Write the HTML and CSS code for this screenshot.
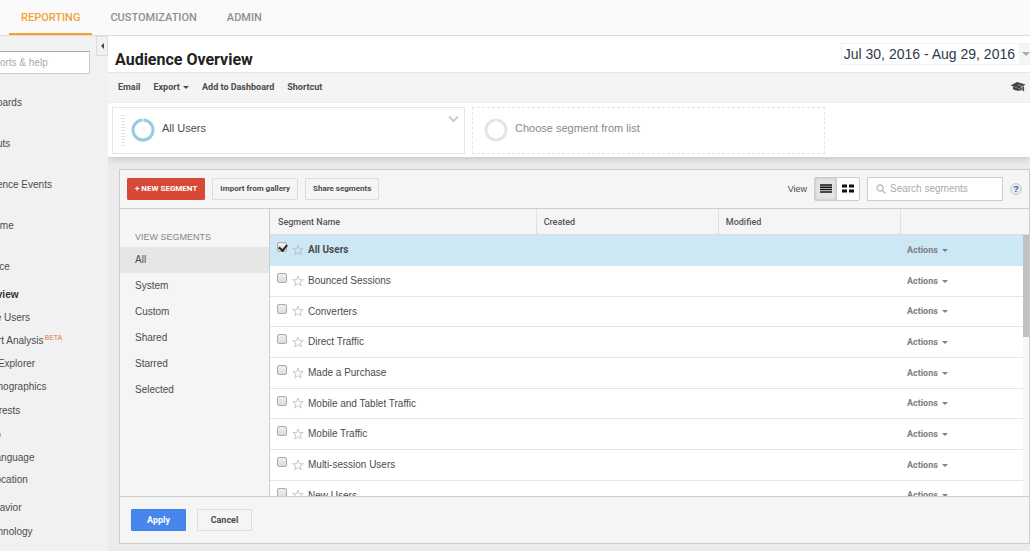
FILE: index.html
```html
<!DOCTYPE html>
<html lang="en">

<head>
    <meta charset="UTF-8">
    <meta name="viewport" content="width=device-width, initial-scale=1.0">
    <title>Audience Overview</title>
    <link rel="stylesheet" href="styles.css">
</head>

<body>
    <nav class="topnav">
        <a href="#" class="active">REPORTING</a>
        <a href="#">CUSTOMIZATION</a>
        <a href="#">ADMIN</a>
    </nav>
    <div class="page">
        <aside class="sidebar">
            <button class="collapse" aria-label="Collapse menu"><span class="arrow_left"></span></button>
            <input type="text" class="report_search" placeholder="Search reports &amp; help" aria-label="Search reports &amp; help">
            <ul class="menu">
                <li class="section"><a href="#">Dashboards</a></li>
                <li class="section"><a href="#">Shortcuts</a></li>
                <li class="section"><a href="#">Intelligence Events</a></li>
                <li class="section"><a href="#">Real-Time</a></li>
                <li class="section open"><a href="#">Audience</a></li>
                <li class="item current"><a href="#">Overview</a></li>
                <li class="item"><a href="#">Active Users</a></li>
                <li class="item"><a href="#">Cohort Analysis</a><sup>BETA</sup></li>
                <li class="item"><a href="#">User Explorer</a></li>
                <li class="group"><a href="#">Demographics</a></li>
                <li class="group"><a href="#">Interests</a></li>
                <li class="group"><a href="#">Geo</a></li>
                <li class="sub"><a href="#">Language</a></li>
                <li class="sub"><a href="#">Location</a></li>
                <li class="group after_sub"><a href="#">Behavior</a></li>
                <li class="group"><a href="#">Technology</a></li>
            </ul>
        </aside>
        <main class="main">
            <header class="title_bar">
                <h1>Audience Overview</h1>
                <button class="date_range">Jul 30, 2016 - Aug 29, 2016<span class="date_arrow"><span class="caret"></span></span></button>
            </header>
            <div class="toolbar">
                <button>Email</button>
                <button>Export <span class="caret"></span></button>
                <button>Add to Dashboard</button>
                <button>Shortcut</button>
                <button class="education" aria-label="Education">
                    <svg width="16" height="12" viewBox="0 0 16 12">
                        <path d="M0.5 4.5 L7 1 L15.5 3.6 L9.5 7.6 Z" fill="#444" />
                        <path d="M3 5.4 L9.5 7.8 L12 6.4 V8.6 C10 10.6 5.5 9.8 3 8 Z" fill="#444" />
                        <path d="M8 4 L12.8 5.4 V7" fill="none" stroke="#aaa" stroke-width="0.8" />
                        <path d="M12.5 6 L14 5.4 L14.2 10.6 L12.4 9.4 Z" fill="#444" />
                    </svg>
                </button>
            </div>
            <section class="segments">
                <div class="card">
                    <span class="grip"></span>
                    <svg class="ring" width="24" height="24" viewBox="0 0 24 24">
                        <circle cx="12" cy="12" r="10" fill="none" stroke="#94cce3" stroke-width="3" />
                        <path d="M12 0 V4" stroke="#fff" stroke-width="1" />
                    </svg>
                    <span class="card_name">All Users</span>
                    <button class="card_menu" aria-label="Segment options">
                        <svg width="11" height="8" viewBox="0 0 11 8">
                            <path d="M1 1.5 L5.5 6 L10 1.5" fill="none" stroke="#ccc" stroke-width="2" />
                        </svg>
                    </button>
                </div>
                <div class="card empty">
                    <svg class="ring" width="24" height="24" viewBox="0 0 24 24">
                        <circle cx="12" cy="12" r="10" fill="none" stroke="#e4e4e4" stroke-width="3" />
                        <path d="M12 0 V4" stroke="#fff" stroke-width="1" />
                    </svg>
                    <span class="card_name">Choose segment from list</span>
                </div>
            </section>
            <section class="panel">
                <div class="panel_top">
                    <button class="btn red">+ NEW SEGMENT</button>
                    <button class="btn">Import from gallery</button>
                    <button class="btn">Share segments</button>
                    <span class="view_label">View</span>
                    <div class="view_toggle">
                        <button class="on" aria-label="List view">
                            <svg width="12" height="9" viewBox="0 0 12 9">
                                <path d="M0 1 H12 M0 3.3 H12 M0 5.6 H12 M0 8 H12" stroke="#111" stroke-width="1.5" />
                            </svg>
                        </button>
                        <button aria-label="Grid view">
                            <svg width="12" height="9" viewBox="0 0 12 9">
                                <path d="M0 2 H5 M7 2 H12 M0 7 H5 M7 7 H12" stroke="#111" stroke-width="3" />
                            </svg>
                        </button>
                    </div>
                    <label class="search">
                        <svg width="10" height="10" viewBox="0 0 10 10">
                            <circle cx="4" cy="4" r="3" fill="none" stroke="#bbb" stroke-width="1.3" />
                            <path d="M6.2 6.2 L9.3 9.3" stroke="#bbb" stroke-width="1.6" />
                        </svg>
                        <input type="text" placeholder="Search segments" aria-label="Search segments">
                    </label>
                    <button class="help" aria-label="Help">?</button>
                </div>
                <div class="panel_body">
                    <div class="filters">
                        <h2>VIEW SEGMENTS</h2>
                        <a href="#" class="active">All</a>
                        <a href="#">System</a>
                        <a href="#">Custom</a>
                        <a href="#">Shared</a>
                        <a href="#">Starred</a>
                        <a href="#">Selected</a>
                    </div>
                    <div class="list">
                        <table>
                            <thead>
                                <tr>
                                    <th class="col_name">Segment Name</th>
                                    <th class="col_date">Created</th>
                                    <th class="col_date">Modified</th>
                                    <th class="col_actions"></th>
                                </tr>
                            </thead>
                            <tbody id="rows"></tbody>
                        </table>
                        <div class="scroll"><div class="thumb"></div></div>
                    </div>
                </div>
                <div class="panel_bottom">
                    <button class="btn blue">Apply</button>
                    <button class="btn cancel">Cancel</button>
                </div>
            </section>
        </main>
    </div>
    <script src="script.js"></script>
</body>

</html>
```
FILE: styles.css
```css
* {
    margin: 0;
    padding: 0;
    box-sizing: border-box;
}

body {
    min-height: 100vh;
    display: flex;
    flex-direction: column;
    font-family: "Liberation Sans", Arial, sans-serif;
    font-size: 10px;
    color: #4c4c4c;
    background-color: #ebebeb;
    overflow-x: hidden;
}

button {
    font-family: inherit;
    color: inherit;
    border: none;
    background: none;
}

a {
    color: inherit;
    text-decoration: none;
}

svg {
    display: block;
}

.caret {
    display: inline-block;
    border: 3px solid transparent;
    border-top-color: currentColor;
    border-bottom: none;
    vertical-align: middle;
}

/* top navigation */
.topnav {
    display: flex;
    gap: 6px;
    height: 36px;
    padding-left: 9px;
    background-color: #fafafa;
    border-bottom: 1px solid #ddd;
}

.topnav a {
    padding: 0 12px;
    font: 500 11px/36px Roboto, sans-serif;
    color: #8f8f8f;
}

.topnav .active {
    height: 35px;
    color: #f3a035;
    border-bottom: 2px solid #f3a035;
}

.page {
    flex: 1;
    display: flex;
}

/* left menu, slid partly out of the window */
.sidebar {
    position: relative;
    flex: none;
    width: 163px;
    margin-left: -55px;
    padding-top: 15px;
    background-color: #f1f1f1;
}

.collapse {
    position: absolute;
    top: 0;
    right: 0;
    width: 12px;
    height: 20px;
    display: flex;
    align-items: center;
    justify-content: center;
    border: 1px solid #ddd;
    background-color: #f1f1f1;
}

.arrow_left {
    border: 3px solid transparent;
    border-right-color: #444;
    border-left: none;
}

.report_search {
    display: block;
    width: 145px;
    height: 23px;
    padding-left: 5px;
    font: 10px "Liberation Sans", Arial, sans-serif;
    border: 1px solid #ccc;
    border-top-color: #aaa;
    background-color: #fff;
}

::placeholder {
    color: #aaa;
}

.menu {
    padding: 17px 0 0 23px;
    list-style: none;
}

.menu li {
    white-space: nowrap;
    line-height: 24px;
}

.menu .section {
    margin-bottom: 17px;
}

.menu .open {
    margin-bottom: 4px;
}

.menu .item {
    height: 23px;
    padding-left: 6px;
    line-height: 23px;
}

.menu .group {
    padding-left: 14px;
}

.menu .sub {
    padding-left: 22px;
    line-height: 22px;
}

.menu .after_sub {
    margin-top: 5px;
}

.menu .current {
    font-weight: bold;
    color: #333;
}

.menu sup {
    margin-left: 1px;
    font-size: 7px;
    line-height: 7px;
    color: #e07b45;
}

/* report header */
.main {
    flex: 1;
    min-width: 0;
}

.title_bar {
    display: flex;
    align-items: center;
    justify-content: space-between;
    height: 36px;
    padding-left: 7px;
    background-color: #fff;
}

.title_bar h1 {
    padding-top: 11px;
    font: bold 16px/18px Roboto, sans-serif;
    color: #222;
}

.date_range {
    display: flex;
    align-items: center;
    height: 22px;
    padding-left: 2px;
    font-size: 14px;
    color: #2d3a4b;
    border: 1px solid #f1f1f1;
    border-right: none;
}

.date_arrow {
    display: flex;
    align-items: center;
    height: 20px;
    margin-left: 4px;
    padding-left: 3px;
    color: #aaa;
    background-color: #f5f5f5;
}

.date_arrow .caret {
    border-width: 4px;
    border-bottom: none;
}

.toolbar {
    display: flex;
    align-items: center;
    gap: 13px;
    height: 31px;
    padding: 0 4px 2px 10px;
    background-color: #f4f4f4;
    border-top: 1px solid #e5e5e5;
    border-bottom: 1px solid #eee;
}

.toolbar button {
    font: bold 9px Roboto, sans-serif;
}

.toolbar .caret {
    margin-left: 1px;
}

.toolbar .education {
    margin-left: auto;
}

.segments {
    position: relative;
    display: flex;
    gap: 7px;
    padding: 4px 4px 3px;
    background-color: #fff;
    box-shadow: 0 1px 8px rgba(0, 0, 0, 0.2);
    clip-path: inset(0 0 -12px 0);
}

.card {
    display: flex;
    align-items: flex-start;
    flex: 0 1 353px;
    height: 47px;
    padding: 7px 5px 0 8px;
    border: 1px solid #e5e5e5;
}

.card.empty {
    padding-left: 11px;
    border-style: dashed;
    color: #888;
}

.grip {
    width: 4px;
    height: 32px;
    margin-right: 6px;
    background: repeating-linear-gradient(#e2e2e2 0 1px, #fff 1px 3px);
}

.ring {
    margin-top: 3px;
}

.card_name {
    flex: 1;
    margin-left: 7px;
    font-size: 11px;
    line-height: 26px;
}

/* segment picker */
.panel {
    margin: 12px 0 8px 11px;
    border: 1px solid #ccc;
    background-color: #f5f5f5;
}

.panel_top {
    display: flex;
    align-items: center;
    gap: 7px;
    height: 38px;
    padding: 0 7px 1px;
}

.btn {
    height: 22px;
    padding: 0 7px;
    font: bold 8px Roboto, sans-serif;
    white-space: nowrap;
    border: 1px solid #dcdcdc;
    border-radius: 1px;
    background-color: #f5f5f5;
}

.btn.red {
    color: #fff;
    border-color: #d64937;
    background-color: #d64937;
}

.view_label {
    margin-left: auto;
    font-size: 9px;
}

.view_toggle {
    display: flex;
    height: 24px;
    border: 1px solid #ccc;
    border-radius: 2px;
    background-color: #fff;
}

.view_toggle button {
    display: flex;
    align-items: center;
    justify-content: center;
    width: 22px;
}

.view_toggle .on {
    border-right: 1px solid #ccc;
    background-color: #e4e4e4;
    box-shadow: inset 0 0 3px #bbb;
}

.search {
    display: flex;
    align-items: center;
    width: 136px;
    height: 24px;
    padding-left: 8px;
    border: 1px solid #ccc;
    background-color: #fff;
}

.search input {
    flex: 1;
    min-width: 0;
    margin-left: 4px;
    font: 10px "Liberation Sans", Arial, sans-serif;
    border: none;
    outline: none;
}

.help {
    width: 12px;
    height: 12px;
    font-size: 9px;
    font-weight: bold;
    line-height: 10px;
    color: #36639a;
    border: 1px solid #ccc;
    border-radius: 50%;
    background-color: #e6e8ec;
}

.panel_body {
    display: flex;
    height: 289px;
    border-top: 1px solid #ccc;
    border-bottom: 1px solid #ccc;
}

.filters {
    flex: none;
    width: 150px;
    padding-top: 19px;
    border-right: 1px solid #ccc;
}

.filters h2 {
    padding-left: 15px;
    font-size: 9px;
    font-weight: normal;
    line-height: 19px;
    color: #888;
}

.filters a {
    display: block;
    padding-left: 15px;
    line-height: 26px;
}

.filters .active {
    background-color: #e6e6e6;
}

.list {
    position: relative;
    flex: 1;
    overflow: hidden;
}

.list table {
    width: 100%;
    table-layout: fixed;
    border-collapse: separate;
    border-spacing: 0;
}

.list th {
    height: 26px;
    padding-left: 7px;
    font: 500 9px Roboto, sans-serif;
    text-align: left;
    color: #555;
    border-left: 1px solid #e0e0e0;
    border-bottom: 1px solid #ddd;
}

.list .col_name {
    width: 35%;
    padding-left: 8px;
    border-left: none;
}

.col_date {
    width: 24%;
}

.list .col_actions {
    width: 17%;
}

.list td {
    height: 31px;
    border-bottom: 1px solid #e5e5e5;
    background-color: #fff;
}

.list tr:nth-child(3n) td {
    height: 30px;
}

.list .selected td {
    border-bottom-color: #cce8f4;
    background-color: #cce8f4;
}

.segment {
    display: flex;
    align-items: center;
    padding: 0 0 1px 7px;
}

.segment input {
    appearance: none;
    width: 10px;
    height: 10px;
    margin: 0 5px 5px 0;
    border: 1px solid #aaa;
    border-radius: 2px;
    background: linear-gradient(#eee, #ddd);
}

.segment input:checked::after {
    content: "";
    display: block;
    width: 4px;
    height: 6px;
    margin-left: 2px;
    border: solid #222;
    border-width: 0 2px 2px 0;
    transform: rotate(40deg);
}

.segment label {
    margin-left: 4px;
}

.selected label {
    font: bold 10px Roboto, sans-serif;
}

.actions {
    padding: 0 0 2px 7px;
    font: bold 9px Roboto, sans-serif;
    color: #808080;
}

.actions .caret {
    margin-left: 2px;
}

/* lies over the right edge of the rows */
.scroll {
    position: absolute;
    top: 26px;
    right: 0;
    bottom: 0;
    width: 6px;
    background-color: #f7f7f7;
}

.thumb {
    height: 102px;
    background-color: #c1c1c1;
}

.panel_bottom {
    display: flex;
    align-items: center;
    gap: 11px;
    height: 46px;
    padding-left: 11px;
}

.panel_bottom .btn {
    width: 55px;
    font-size: 9px;
}

.btn.blue {
    color: #fff;
    border-color: #3f7fea;
    background-color: #4787ed;
}
```
FILE: script.js
```js
const segments = [
    'All Users',
    'Bounced Sessions',
    'Converters',
    'Direct Traffic',
    'Made a Purchase',
    'Mobile and Tablet Traffic',
    'Mobile Traffic',
    'Multi-session Users',
    'New Users',
];

const star = `<svg width="12" height="12" viewBox="0 0 12 12">
    <path d="M6 1 L7.3 4.6 L11.2 4.7 L8.1 7 L9.2 10.8 L6 8.6 L2.8 10.8 L3.9 7 L0.8 4.7 L4.7 4.6 Z" fill="none" stroke="#bbb" stroke-width="0.8" />
</svg>`;

const $rows = document.querySelector('#rows');

segments.forEach((name, i) => {
    const row = document.createElement('tr');
    if (i === 0) row.classList.add('selected');
    row.innerHTML = `
        <td><div class="segment">
            <input type="checkbox" id="segment${i}" ${i === 0 ? 'checked' : ''}>
            <button aria-label="Star">${star}</button>
            <label for="segment${i}">${name}</label>
        </div></td>
        <td></td>
        <td></td>
        <td><button class="actions">Actions <span class="caret"></span></button></td>`;
    $rows.appendChild(row);
});
```
